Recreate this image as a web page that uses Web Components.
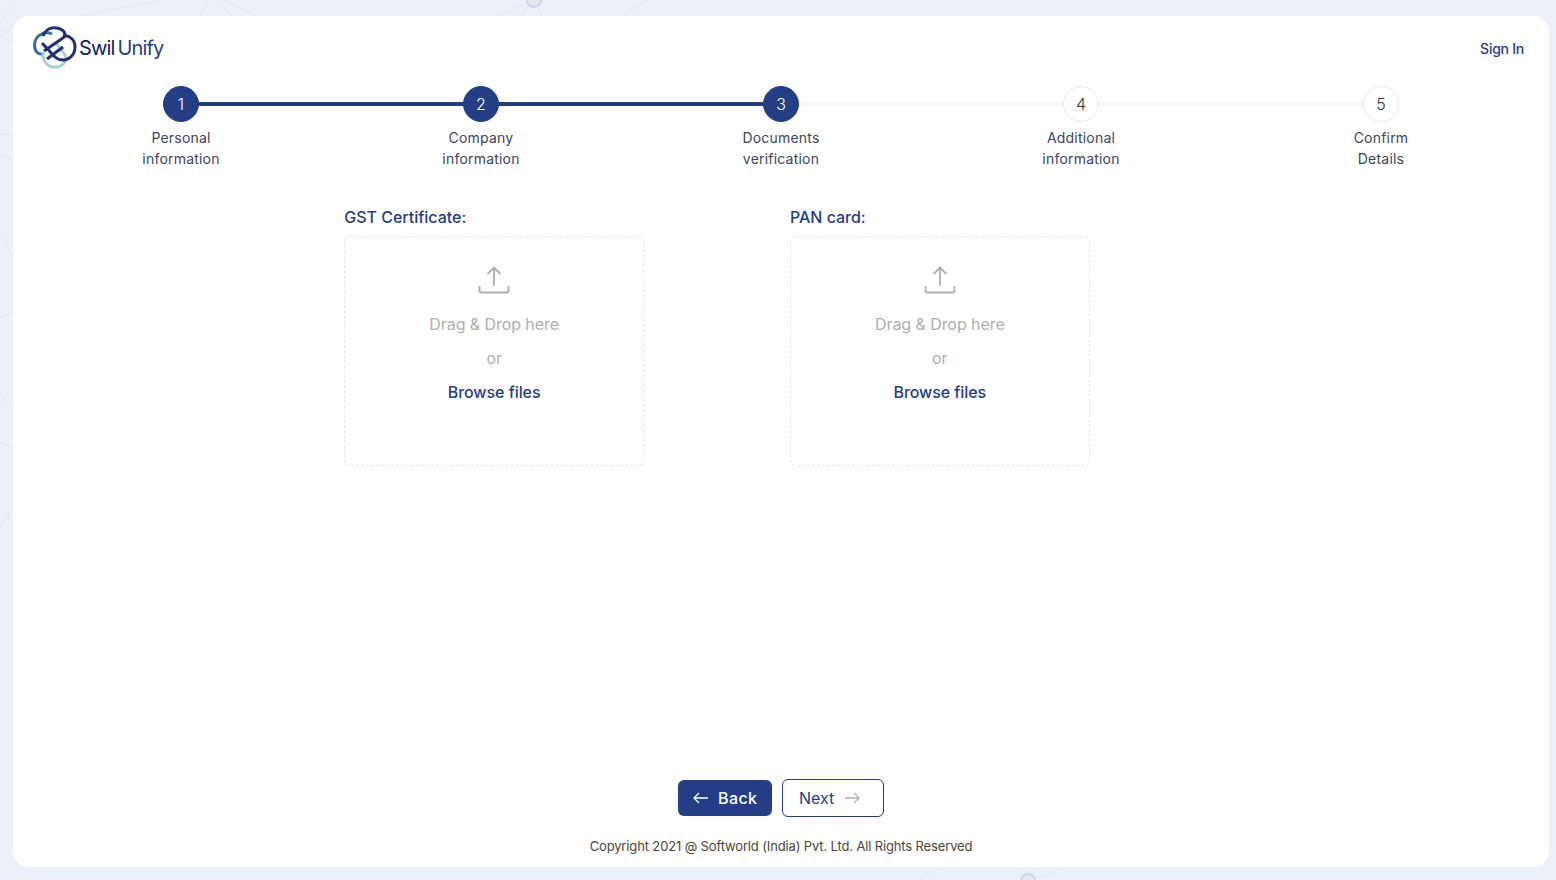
<!DOCTYPE html>
<html lang="en">
<head>
<meta charset="utf-8">
<title>Swil Unify</title>
<style>
  html, body { margin: 0; height: 100%; }
  body { background: #ecf1f9; font-family: "Inter", "Liberation Sans", sans-serif; overflow: hidden; }
</style>
</head>
<body>
<page-backdrop></page-backdrop>
<signup-shell>
  <swil-header slot="header"></swil-header>
  <step-bar slot="steps" data-current="3"></step-bar>
  <upload-row slot="main">
    <upload-box label="GST Certificate:"></upload-box>
    <upload-box label="PAN card:"></upload-box>
  </upload-row>
  <wizard-footer slot="footer"></wizard-footer>
</signup-shell>

<script>
// faint network pattern behind the card
class PageBackdrop extends HTMLElement {
  constructor() {
    super();
    this.attachShadow({ mode: 'open' });
    this.shadowRoot.innerHTML = `
      <style>
        :host { position: absolute; inset: 0; display: block; }
        svg { display: block; }
        path { stroke: #e2e6ef; fill: none; }
        circle { fill: #e6e8f0; stroke: #cdd3ea; stroke-width: 2; }
      </style>
      <svg width="1556" height="880">
        <path d="M0 23L18 0M0 30L80 16L163 0M207 0L200 16M215 0L232 16M223 0L258 16M527 3L497 16M528 6L522 16M538 8L542 16M648 0L622 16"/>
        <path d="M0 35L13 43M0 134L13 135M0 155L13 160M0 230L13 258M0 318L13 312M0 393L13 410M0 442L13 448M0 528L13 507"/>
        <path d="M940 867L918 880M1019 867L1027 875M1040 867L1032 875M1065 867L1036 878"/>
        <circle cx="534" cy="0" r="7"/>
        <circle cx="1028" cy="881" r="7"/>
      </svg>`;
  }
}

class SignupShell extends HTMLElement {
  constructor() {
    super();
    this.attachShadow({ mode: 'open' });
    this.shadowRoot.innerHTML = `
      <style>
        :host {
          position: relative;
          display: flex;
          flex-direction: column;
          box-sizing: border-box;
          width: 1536px;
          height: 851px;
          margin: 16px 0 0 13px;
          background: #fff;
          border-radius: 16px;
        }
        .main { flex: 1; }
      </style>
      <slot name="header"></slot>
      <slot name="steps"></slot>
      <div class="main"><slot name="main"></slot></div>
      <slot name="footer"></slot>`;
  }
}

class SwilHeader extends HTMLElement {
  constructor() {
    super();
    this.attachShadow({ mode: 'open' });
    this.shadowRoot.innerHTML = `
      <style>
        :host {
          display: flex;
          justify-content: space-between;
          align-items: center;
          height: 70px;
          padding: 0 25px 0 19px;
        }
        .logo { display: flex; align-items: center; gap: 1px; margin-top: -6px; }
        .brand { font-size: 20px; letter-spacing: -0.85px; color: #14205c; margin-top: -1px; }
        .brand span { color: #243e85; margin-left: 3px; }
        a { font-size: 14px; font-weight: 500; letter-spacing: -0.25px; color: #243e85; text-decoration: none; margin-top: -6px; }
      </style>
      <div class="logo">
        <svg width="46" height="46" viewBox="0 0 46 46" fill="none" stroke-width="3">
          <path d="M20 9C15 6.500 3 8 2.500 20C2.300 26 6 29.500 10 29" stroke="#3d6d9f"/>
          <path d="M11.500 27C9.500 35 15 42.300 23 42.300C30 42.300 34.500 37 34 32C33.600 30 30 25 23 17" stroke="#a5d0da"/>
          <path d="M11 11C13 5 18 2.800 22 2.800C29 2.800 33 6 33 10C33 12 31 13 28 15L12 26" stroke="#1f2f70"/>
          <path d="M31 11C38 10 43 15 43 22C43 30 37 35 31 35C28 35 25 34 22 31L10 18" stroke="#1f2f70"/>
          <path d="M15 34L31 22" stroke="#1f2f70"/>
        </svg>
        <div class="brand">Swil<span>Unify</span></div>
      </div>
      <a href="#">Sign In</a>`;
  }
}

class StepBar extends HTMLElement {
  constructor() {
    super();
    this.attachShadow({ mode: 'open' });
    const steps = [
      ['Personal', 'information'],
      ['Company', 'information'],
      ['Documents', 'verification'],
      ['Additional', 'information'],
      ['Confirm', 'Details']
    ];
    const current = Number(this.dataset.current || 1);
    this.shadowRoot.innerHTML = `
      <style>
        :host {
          display: grid;
          grid-template-columns: repeat(5, 300px);
          padding-left: 18px;
          height: 104px;
        }
        .step { position: relative; display: flex; flex-direction: column; align-items: center; }
        .dot {
          position: relative;
          z-index: 1;
          box-sizing: border-box;
          width: 36px;
          height: 36px;
          border-radius: 50%;
          border: 1px solid #e8e8e8;
          background: #fff;
          color: #333;
          font-size: 16px;
          font-weight: 300;
          display: flex;
          align-items: center;
          justify-content: center;
        }
        .step.done .dot { background: #243e85; border-color: #243e85; color: #fff; }
        /* connector to the next step, sits under the circle */
        .step:not(:last-child)::after {
          content: '';
          position: absolute;
          top: 16px;
          left: 50%;
          width: 100%;
          height: 4px;
          background: #f6f7fa;
        }
        .step.line::after { background: #243e85; }
        .name {
          margin-top: 5px;
          font-size: 14px;
          line-height: 21px;
          letter-spacing: 0.2px;
          color: #3c4460;
          text-align: center;
        }
      </style>
      ${steps.map((s, i) => `
        <div class="step ${i < current ? 'done' : ''} ${i < current - 1 ? 'line' : ''}">
          <div class="dot">${i + 1}</div>
          <div class="name">${s[0]}<br>${s[1]}</div>
        </div>`).join('')}`;
  }
}

class UploadRow extends HTMLElement {
  constructor() {
    super();
    this.attachShadow({ mode: 'open' });
    this.shadowRoot.innerHTML = `
      <style>
        :host { display: flex; gap: 146px; padding: 15px 0 0 331.300px; }
      </style>
      <slot></slot>`;
  }
}

class UploadBox extends HTMLElement {
  constructor() {
    super();
    this.attachShadow({ mode: 'open' });
    this.shadowRoot.innerHTML = `
      <style>
        :host { display: block; width: 299.700px; }
        .label { font-size: 16px; font-weight: 500; line-height: 24px; letter-spacing: -0.02px; color: #243e85; margin-bottom: 7px; }
        .box {
          box-sizing: border-box;
          height: 230px;
          border: 1px dashed #e6e6e6;
          border-radius: 6px;
          padding-top: 29px;
          display: flex;
          flex-direction: column;
          align-items: center;
        }
        svg { display: block; margin-bottom: 10px; }
        .line { font-size: 16px; line-height: 24px; margin-top: 10px; color: #aeaeae; letter-spacing: -0.07px; }
        .line:first-of-type { margin-top: 8px; }
        .browse { color: #243e85; font-weight: 500; }
      </style>
      <div class="label">${this.getAttribute('label')}</div>
      <div class="box">
        <svg width="32" height="28" viewBox="0 0 32 28" fill="none" stroke="#a9adb4" stroke-width="1.800">
          <path d="M16 20V2M9.500 8L16 1.500L22.500 8"/>
          <path d="M1.500 20V24.500C1.500 25.600 2.400 26.500 3.500 26.500H28.500C29.600 26.500 30.500 25.600 30.500 24.500V20"/>
        </svg>
        <div class="line">Drag &amp; Drop here</div>
        <div class="line">or</div>
        <div class="line browse">Browse files</div>
      </div>`;
  }
}

class WizardFooter extends HTMLElement {
  constructor() {
    super();
    this.attachShadow({ mode: 'open' });
    this.shadowRoot.innerHTML = `
      <style>
        :host { display: flex; flex-direction: column; align-items: center; padding: 0 0 11px 0; }
        .btns { display: flex; align-items: center; gap: 10px; margin-bottom: 19px; }
        button {
          box-sizing: border-box;
          font: inherit;
          font-size: 16px;
          font-weight: 500;
          border-radius: 6px;
          display: flex;
          align-items: center;
          cursor: pointer;
          padding: 0;
        }
        .back { width: 94px; height: 36px; background: #243e85; border: 0; color: #fff; padding-left: 15px; gap: 10px; letter-spacing: 0.400px; }
        .next { width: 102px; height: 38px; background: #fff; border: 1px solid #243e85; color: #243e85; padding-left: 16px; gap: 11px; font-weight: 400; }
        .copy { font-size: 13px; line-height: 20px; color: #4b4636; letter-spacing: -0.140px; }
      </style>
      <div class="btns">
        <button class="back">
          <svg width="15" height="12" viewBox="0 0 15 12" fill="none" stroke="#fff" stroke-width="1.300"><path d="M15 6H1M6 1L1 6L6 11"/></svg>
          Back
        </button>
        <button class="next">
          Next
          <svg width="15" height="12" viewBox="0 0 15 12" fill="none" stroke="#b0b0b0" stroke-width="1.300"><path d="M0 6H14M9 1L14 6L9 11"/></svg>
        </button>
      </div>
      <div class="copy">Copyright 2021 @ Softworld (India) Pvt. Ltd. All Rights Reserved</div>`;
  }
}

customElements.define('page-backdrop', PageBackdrop);
customElements.define('signup-shell', SignupShell);
customElements.define('swil-header', SwilHeader);
customElements.define('step-bar', StepBar);
customElements.define('upload-row', UploadRow);
customElements.define('upload-box', UploadBox);
customElements.define('wizard-footer', WizardFooter);
</script>
</body>
</html>
